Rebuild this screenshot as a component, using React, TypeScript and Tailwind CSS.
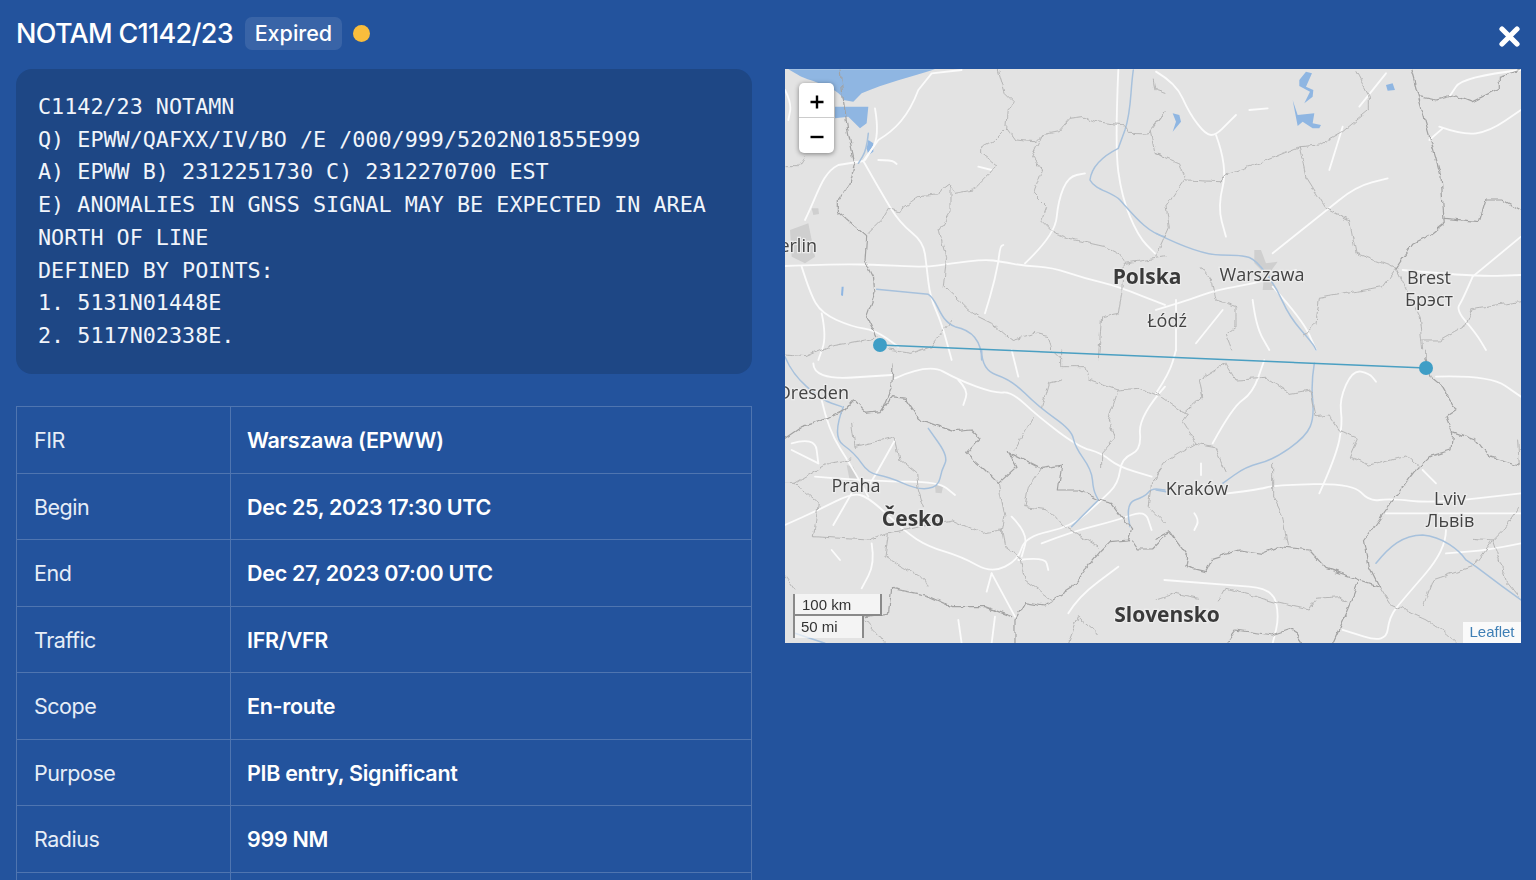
const facts: { label: string; value: string }[] = [
  { label: "FIR", value: "Warszawa (EPWW)" },
  { label: "Begin", value: "Dec 25, 2023 17:30 UTC" },
  { label: "End", value: "Dec 27, 2023 07:00 UTC" },
  { label: "Traffic", value: "IFR/VFR" },
  { label: "Scope", value: "En-route" },
  { label: "Purpose", value: "PIB entry, Significant" },
  { label: "Radius", value: "999 NM" },
  { label: "", value: "" },
];

const notamText = `C1142/23 NOTAMN
Q) EPWW/QAFXX/IV/BO /E /000/999/5202N01855E999
A) EPWW B) 2312251730 C) 2312270700 EST
E) ANOMALIES IN GNSS SIGNAL MAY BE EXPECTED IN AREA
NORTH OF LINE
DEFINED BY POINTS:
1. 5131N01448E
2. 5117N02338E.`;

// traced from the reference in 3x crop coordinates, one set per map quadrant
type Layer = { water: string[]; city?: string[]; roads: string[]; rivers: string[]; admin: string[]; borders: string[] };

const northWest: Layer = {
  water: [
    "M10 28 L450 28 C380 50 300 70 230 100 L205 125 L175 120 C165 80 60 60 40 45 Z",
    "M150 140 L250 140 L245 190 L225 205 L190 170 L150 175 Z",
    "M250 240 L265 250 L265 275 L250 285 L245 265 Z",
    "M170 680 L176 680 L174 708 L168 706 Z",
  ],
  city: ["M15 510 L70 490 L90 590 L60 610 L20 590 Z", "M80 445 L100 445 L102 462 L85 465 Z"],
  roads: [
    "M0 618 L150 612 L300 615 L420 622 L500 610 L600 598 L650 605 L720 618 L800 622 L900 655 L1000 680 L1140 735",
    "M60 480 C100 400 110 340 160 315 L235 303 L280 240 C330 210 370 170 400 90 L440 40 L530 30",
    "M235 303 L290 400 L345 490 L415 545 L425 620 L435 710 L470 790 L500 900",
    "M50 620 L75 700 L110 760 L200 800 L270 810 L340 860",
    "M110 760 L125 830 L100 900",
    "M1000 30 L990 260 L1010 410 L1060 530 L1110 580",
    "M720 610 L810 525 L820 420 L850 350 L900 340",
    "M640 605 L630 660 L600 760",
    "M640 605 L645 560 L655 555",
    "M270 145 L285 230 L240 300",
    "M280 300 L320 300 L335 312",
    "M580 320 L620 330",
    "M0 90 L20 130 L10 180",
  ],
  rivers: [
    "M275 688 L430 703 C460 720 460 780 510 800 C560 810 590 840 590 900",
    "M1045 30 C1035 100 1040 150 1020 210 L1000 265 C950 290 920 320 915 360 C930 390 980 395 1005 420 C1050 470 1090 520 1140 530",
    "M250 220 L245 270 L220 310",
  ],
  admin: [
    "M640 30 L660 100 L685 125 L670 150 L665 205 L630 240 L590 260 L590 280 L635 315 L610 345 L565 390 L510 400 L490 370 L470 385 L460 405 L400 410 L340 455 L310 445 L290 480 L250 520",
    "M665 205 L690 240 L750 245 L770 225 L820 215 L855 175 L890 170 L930 185 L1020 195 L1030 220 L1090 222 L1140 155",
    "M770 225 L740 290 L770 330 L745 400 L785 440 L770 480 L810 520 L870 540 L960 560 L1000 580 L1020 610 L1140 590",
    "M495 375 L495 460 L465 510 L485 590 L475 680 L520 720 L550 750 L580 770 L620 790 L680 840 L750 820 L790 830 L800 870 L830 900",
    "M1015 610 L1010 700 L1000 760 L950 770 L940 900",
    "M0 320 L40 320 L60 290",
    "M0 885 L60 890 L130 860 L270 835",
    "M310 870 L380 880 L440 860 L500 775",
    "M1105 60 L1110 90 L1140 100",
    "M1140 155 L1095 210 L1110 280 L1140 290",
  ],
  borders: [
    "M165 30 L175 120 L190 220 L210 310 L195 370 L160 420 L160 455 L200 490 L245 530 L240 600 L265 650 L270 700 L245 770 L275 830",
  ],
};

const southWest: Layer = {
  water: [],
  city: ["M185 345 L205 350 L220 385 L195 395 Z", "M450 405 L475 405 L470 430 L452 428 Z"],
  roads: [
    "M330 85 L430 40 L520 90 L630 130 L680 125 L760 200 L880 290 L950 310 L1000 350 L1100 380",
    "M680 0 L700 80",
    "M1140 110 L1060 200 L1070 300 L1010 325 L1000 400 L950 450 L860 530 L720 560 L700 630 L620 670 L530 620 L430 590 L360 545 L250 440 L200 430 L100 480 L0 525",
    "M620 670 L690 800",
    "M700 630 L780 620 L790 660",
    "M90 380 L280 395 L460 395 L510 435",
    "M260 580 L270 640 L230 715",
    "M200 430 L145 525",
    "M330 270 L280 360 L250 410",
    "M110 150 L130 240 L200 350 L250 440",
    "M20 280 L90 260 L100 340",
    "M85 40 L85 90 L320 75",
    "M20 300 L80 330 L100 340",
    "M520 90 L550 120 L535 165",
    "M680 500 L730 550 L710 620",
    "M770 580 L860 545 L1000 510 L1080 480 L1100 540",
    "M620 670 L605 725",
    "M520 810 L530 880",
    "M630 800 L620 880",
    "M850 790 L880 740 L1000 650",
    "M140 600 L165 630",
  ],
  rivers: [
    "M590 0 L590 60 L680 90 L760 170 L860 240 L870 290 L920 360 L925 420 L940 450",
    "M175 170 L140 260 L210 310 L250 370 L310 380 L400 420 L460 410 L470 360 L490 320 L430 235",
    "M1035 530 L1020 460 L1080 440 L1100 415 L1140 420",
    "M940 450 L860 530",
    "M0 20 L20 70 L110 150 L170 170",
    "M30 850 L120 880",
  ],
  admin: [
    "M0 400 L30 400 L100 460 L85 560 L250 570 L300 550 L360 540 L500 510 L590 550 L650 540 L660 590 L705 625 L720 690 L800 750",
    "M640 400 L660 500 L650 550",
    "M310 550 L300 620 L420 690 L430 710",
    "M200 220 L210 290 L330 260 L345 330 L395 370 L400 420 L415 470",
    "M30 400 L130 340 L195 330",
    "M745 200 L690 300",
    "M830 0 L830 50 L900 50 L910 90 L1000 120 L1060 115 L1120 140",
    "M830 90 L790 100 L770 170",
    "M1000 120 L970 210 L990 265 L950 310 L950 350",
    "M720 470 L730 410 L770 350",
    "M720 470 L790 480 L840 530 L940 590",
    "M1130 350 L1100 400 L1090 470 L1140 520",
    "M850 880 L880 800 L940 850",
    "M240 810 L300 880",
    "M0 680 L30 720",
  ],
  borders: [
    "M325 40 L320 110 L290 180",
    "M690 880 L690 810 L720 755 L780 765 L860 715 L900 660 L950 600 L975 575 L1030 570 L1040 540 L980 460 L940 450 L880 420 L820 420 L830 345 L770 355 L670 305 L695 350 L640 400 L600 360 L545 310 L585 265 L560 240 L510 245 L480 235 L400 205 L360 145 L320 140 L285 185 L245 190 L205 150 L180 180 L130 205 L50 230 L0 265",
    "M1040 570 L1060 600 L1100 600 L1140 560",
    "M320 715 L420 735 L500 770 L600 770 L680 800",
    "M320 715 L310 790 L240 800",
  ],
};

const northEast: Layer = {
  water: [
    "M430 240 L450 215 L468 220 L450 260 L472 270 L470 290 L445 310 L462 275 L430 258 Z",
    "M410 300 L425 345 L475 340 L470 370 L495 375 L490 385 L470 385 L440 365 L425 378 Z",
    "M690 255 L710 250 L717 270 L695 272 Z",
    "M50 340 L70 345 L75 365 L50 395 L60 365 Z",
  ],
  city: ["M295 750 L315 750 L330 790 L365 785 L340 820 L360 870 L320 870 L325 820 L295 790 Z"],
  roads: [
    "M0 215 L60 250 L100 340 L150 405 L180 405 L215 370 L240 345",
    "M180 405 L215 500 L185 620 L210 710",
    "M350 760 L500 640 L600 560 L695 535",
    "M0 930 L100 900 L180 870 L300 850 L420 810",
    "M850 380 L920 405 L1000 395 L1095 330",
    "M820 420 L860 385",
    "M950 830 L1095 710",
    "M740 810 L950 830 L1095 825",
    "M950 830 L920 900 L900 930 L960 1000 L990 1050",
    "M350 860 L440 960 L480 1050",
    "M1095 210 L920 230 L880 290",
    "M520 510 L560 380",
    "M610 320 L690 220",
    "M290 900 L300 980 L340 1050",
    "M60 900 L60 1050",
    "M280 330 L335 325",
    "M200 930 L120 1030",
  ],
  rivers: ["M0 700 L130 765 L260 765 L300 780 L360 860 L400 950 L470 1030 L480 1050"],
  admin: [
    "M0 460 L70 490 L90 540 L190 545 L215 520 L310 490 L430 440 L490 435 L560 395 L640 330 L640 290 L600 215",
    "M430 440 L450 530 L510 625 L580 660 L600 760 L720 805 L680 860 L490 895 L480 970 L440 1010",
    "M85 540 L30 620 L40 680 L0 770",
    "M720 805 L790 950 L800 1050",
    "M130 800 L170 850 L180 900 L240 920 L240 980 L210 1000 L230 1050",
    "M1095 905 L950 925 L930 975 L850 1020 L800 1020",
  ],
  borders: [
    "M765 210 L790 300 L855 530 L865 670 L820 705 L770 730 L720 805",
    "M790 290 L840 300 L900 285 L950 305 L1030 265 L1030 230 L1095 210",
    "M865 655 L970 665 L990 600 L1040 600 L1095 630",
  ],
};

const southEast: Layer = {
  water: [],
  roads: [
    "M215 430 L300 420 L360 405 L590 400 L640 455 L700 445 L830 460 L1095 430",
    "M0 130 L40 70 L60 0",
    "M170 280 L230 170 L290 130 L325 30",
    "M490 430 L540 320 L560 220 L550 150 L590 60 L640 70 L660 95",
    "M840 80 L1000 75 L1095 140",
    "M25 690 L210 705 L350 715 L370 800 L350 880",
    "M690 490 L1095 490",
    "M870 540 L870 600 L740 750 L700 800 L690 880 L560 840",
    "M800 360 L840 400",
    "M1095 580 L1000 600 L870 610",
    "M115 490 L130 510 L115 540",
    "M135 340 L135 375",
  ],
  rivers: [
    "M475 40 L465 100 L475 200 L450 260 L350 330 L270 350 L200 400",
    "M0 420 L30 425",
    "M660 640 C700 590 740 555 800 555 C860 560 910 600 930 630 L960 650 L1040 710 L1095 750",
  ],
  admin: [
    "M0 130 L70 180 L100 190 L80 215 L120 280 L175 290 L210 365",
    "M120 280 L20 340 L0 390",
    "M210 40 L240 90 L330 85 L400 130 L465 120 L480 200 L520 195 L550 240 L605 265 L580 320 L640 345 L750 315 L790 350",
    "M350 340 L350 440 L380 500 L395 590",
    "M210 40 L130 90 L140 140 L90 185",
    "M670 710 L700 760 L810 810 L870 850 L900 880",
    "M1090 470 L1040 540 L1010 570 L1050 690 L1090 740",
    "M800 770 L830 690 L950 650 L1010 570 L950 565",
    "M0 750 L60 730 L130 745",
    "M190 750 L210 715 L370 760 L460 780 L480 745 L550 740 L570 755",
    "M1085 270 L1090 345",
  ],
  borders: [
    "M810 0 L810 30 L830 85 L860 110 L900 180 L870 200 L890 250 L885 300 L820 320 L770 370 L690 480 L625 570 L640 650 L670 710",
    "M670 710 L610 690 L510 655 L460 600 L370 590 L320 610 L250 600 L170 625 L150 665 L90 650 L95 620 L40 545 L0 565",
    "M610 690 L570 790 L530 880",
    "M890 245 L960 270 L1000 320 L1090 345",
    "M210 880 L240 840 L350 855 L410 835 L440 880",
  ],
};

// rounds the corners of a traced polyline, curves are left as they are
function smooth(d: string) {
  if (d.includes("C")) return d;
  const n = d.match(/-?\d+(\.\d+)?/g)!.map(Number);
  const pts: [number, number][] = [];
  for (let i = 0; i < n.length; i += 2) pts.push([n[i], n[i + 1]]);
  let out = `M${pts[0][0]} ${pts[0][1]}`;
  for (let i = 1; i < pts.length - 1; i++) {
    const mx = (pts[i][0] + pts[i + 1][0]) / 2;
    const my = (pts[i][1] + pts[i + 1][1]) / 2;
    out += ` Q${pts[i][0]} ${pts[i][1]} ${mx} ${my}`;
  }
  const last = pts[pts.length - 1];
  return `${out} L${last[0]} ${last[1]}`;
}

function MapLayer({ layer, x, y, part }: { layer: Layer; x: number; y: number; part: "base" | "lines" }) {
  const place = `translate(${x} ${y}) scale(0.3333)`;
  if (part === "base") {
    return (
      <g transform={place} fill="none" strokeLinejoin="round" strokeLinecap="round">
        {layer.city?.map((d) => <path key={d} d={d} fill="#cfcfcf" />)}
        {layer.water.map((d) => <path key={d} d={d} fill="#8fb6e2" />)}
        {layer.roads.map((d) => <path key={d} d={smooth(d)} stroke="#fbfbfb" strokeWidth={5.5} />)}
        {layer.rivers.map((d) => <path key={d} d={smooth(d)} stroke="#a7c1dc" strokeWidth={4.5} />)}
      </g>
    );
  }
  return (
    <g transform={place} fill="none" strokeLinejoin="round" strokeLinecap="round">
      {layer.admin.map((d) => <path key={d} d={d} stroke="#b2b2b2" strokeWidth={2.8} strokeDasharray="6 2" />)}
      {layer.borders.map((d) => <path key={d} d={d} stroke="#a2a2a2" strokeWidth={3.6} />)}
    </g>
  );
}

const placeLabels: { text: string; x: number; y: number; anchor?: "start" | "middle" | "end"; bold?: boolean }[] = [
  { text: "Berlin", x: 817, y: 252, anchor: "end" },
  { text: "Polska", x: 1147, y: 284, anchor: "middle", bold: true },
  { text: "Warszawa", x: 1262, y: 281, anchor: "middle" },
  { text: "Łódź", x: 1167, y: 327, anchor: "middle" },
  { text: "Brest", x: 1429, y: 284, anchor: "middle" },
  { text: "Брэст", x: 1429, y: 306, anchor: "middle" },
  { text: "Dresden", x: 849, y: 399, anchor: "end" },
  { text: "Praha", x: 856, y: 492, anchor: "middle" },
  { text: "Česko", x: 913, y: 526, anchor: "middle", bold: true },
  { text: "Kraków", x: 1197, y: 495, anchor: "middle" },
  { text: "Lviv", x: 1450, y: 505, anchor: "middle" },
  { text: "Львів", x: 1450, y: 527, anchor: "middle" },
  { text: "Slovensko", x: 1167, y: 622, anchor: "middle", bold: true },
];

const quadrants = [
  { layer: northWest, x: 785, y: 60 },
  { layer: southWest, x: 785, y: 350 },
  { layer: northEast, x: 1156, y: 0 },
  { layer: southEast, x: 1156, y: 350 },
];

function NotamMap() {
  return (
    <div className="relative h-[574px] w-[736px] overflow-hidden bg-[#e3e3e3]">
      <svg className="block h-full w-full" viewBox="785 69 736 574">
        <defs>
          <filter id="jagged" x="785" y="69" width="736" height="574" filterUnits="userSpaceOnUse">
            <feTurbulence type="fractalNoise" baseFrequency="0.11" numOctaves="2" seed="4" />
            <feDisplacementMap in="SourceGraphic" scale="6" xChannelSelector="R" yChannelSelector="G" />
          </filter>
        </defs>
        <g>
          {quadrants.map((q) => <MapLayer key={q.x + "-" + q.y} {...q} part="base" />)}
        </g>
        <g filter="url(#jagged)">
          {quadrants.map((q) => <MapLayer key={q.x + "-" + q.y} {...q} part="lines" />)}
        </g>
        <path d="M880 345 L1426 368" stroke="#4a9fc2" strokeWidth={1.5} fill="none" />
        <circle cx={880} cy={345} r={7} fill="#3f9ec6" />
        <circle cx={1426} cy={368} r={7} fill="#3f9ec6" />
        {placeLabels.map((l) => (
          <text
            key={l.text}
            x={l.x}
            y={l.y}
            textAnchor={l.anchor}
            fill={l.bold ? "#3a3a3a" : "#444444"}
            stroke="#ececec"
            strokeWidth={2.5}
            paintOrder="stroke"
            fontSize={l.bold ? 21 : 18}
            fontWeight={l.bold ? 700 : 400}
            fontFamily="'Open Sans', 'Noto Sans', sans-serif"
          >
            {l.text}
          </text>
        ))}
      </svg>

      <div className="absolute left-[14px] top-[14px] flex w-[35px] flex-col rounded-[5px] bg-white text-black shadow-[0_1px_5px_rgba(0,0,0,0.45)]">
        <div className="flex h-[35px] items-center justify-center border-b border-[#cccccc] pt-[3px]">
          <svg width="14" height="14" viewBox="0 0 14 14">
            <path d="M7 0.5V13.5M0.5 7H13.5" stroke="#000" strokeWidth="2.4" />
          </svg>
        </div>
        <div className="flex h-[35px] items-center justify-center pt-[3px]">
          <svg width="14" height="14" viewBox="0 0 14 14">
            <path d="M0.5 7H13.5" stroke="#000" strokeWidth="2.4" />
          </svg>
        </div>
      </div>

      <div className="absolute bottom-[5px] left-[8px] flex flex-col font-['Liberation_Sans',sans-serif] text-[15px] leading-[19px] text-[#333333]">
        <div className="h-[22px] w-[89px] border-x-2 border-b-2 border-t-0 border-[#8a8a8a] bg-white/60 pl-[7px] pt-[1px]">100 km</div>
        <div className="h-[22px] w-[71px] border-x-2 border-t-0 border-[#8a8a8a] bg-white/60 pl-[6px] pt-[1px]">50 mi</div>
      </div>

      <div className="absolute bottom-0 right-0 flex h-[21px] w-[58px] items-center justify-center bg-white/80 font-['Liberation_Sans',sans-serif] text-[15px] text-[#3f7fb5]">
        Leaflet
      </div>
    </div>
  );
}

export default function App() {
  return (
    <div className="h-[880px] w-[1536px] overflow-hidden bg-[#23539d] font-['Inter',sans-serif] text-white">
      <div className="flex h-[69px] items-start justify-between pl-[16px] pr-[16px]">
        <div className="flex items-center pt-[16px]">
          <h1 className="pt-[1px] text-[27px] font-medium leading-[33px] tracking-[-0.7px]">NOTAM C1142/23</h1>
          <span className="ml-[12px] flex h-[33px] w-[97px] items-center justify-center rounded-[7px] bg-white/10 text-[21.5px] font-medium">
            Expired
          </span>
          <span className="ml-[11px] h-[17px] w-[17px] rounded-full bg-[#f9bd3c]" />
        </div>
        <svg className="mt-[26px]" width="21" height="21" viewBox="0 0 21 21">
          <path d="M3 3L18 18M18 3L3 18" stroke="#fff" strokeWidth="5.2" strokeLinecap="round" />
        </svg>
      </div>

      <div className="flex gap-[33px] pl-[16px]">
        <div className="flex w-[736px] flex-col gap-[32px]">
          <pre className="h-[305px] rounded-[16px] bg-[#1e4785] py-[22px] pl-[22px] font-['DejaVu_Sans_Mono',monospace] text-[21.75px] leading-[32.7px] text-[#f1f5fb]">
            {notamText}
          </pre>

          <div className="border border-b-0 border-white/20">
            {facts.map((row, i) => (
              <div key={i} className="flex h-[66.5px] border-b border-white/20 pt-[1px] text-[21.5px]">
                <div className="-mt-[1px] flex w-[214px] items-center border-r border-white/20 pl-[17px] pt-[1px] tracking-[-0.5px] text-[#e6edf7]">
                  {row.label}
                </div>
                <div className="flex flex-1 items-center pl-[16px] font-semibold tracking-[-0.3px]">{row.value}</div>
              </div>
            ))}
          </div>
        </div>

        <NotamMap />
      </div>
    </div>
  );
}
